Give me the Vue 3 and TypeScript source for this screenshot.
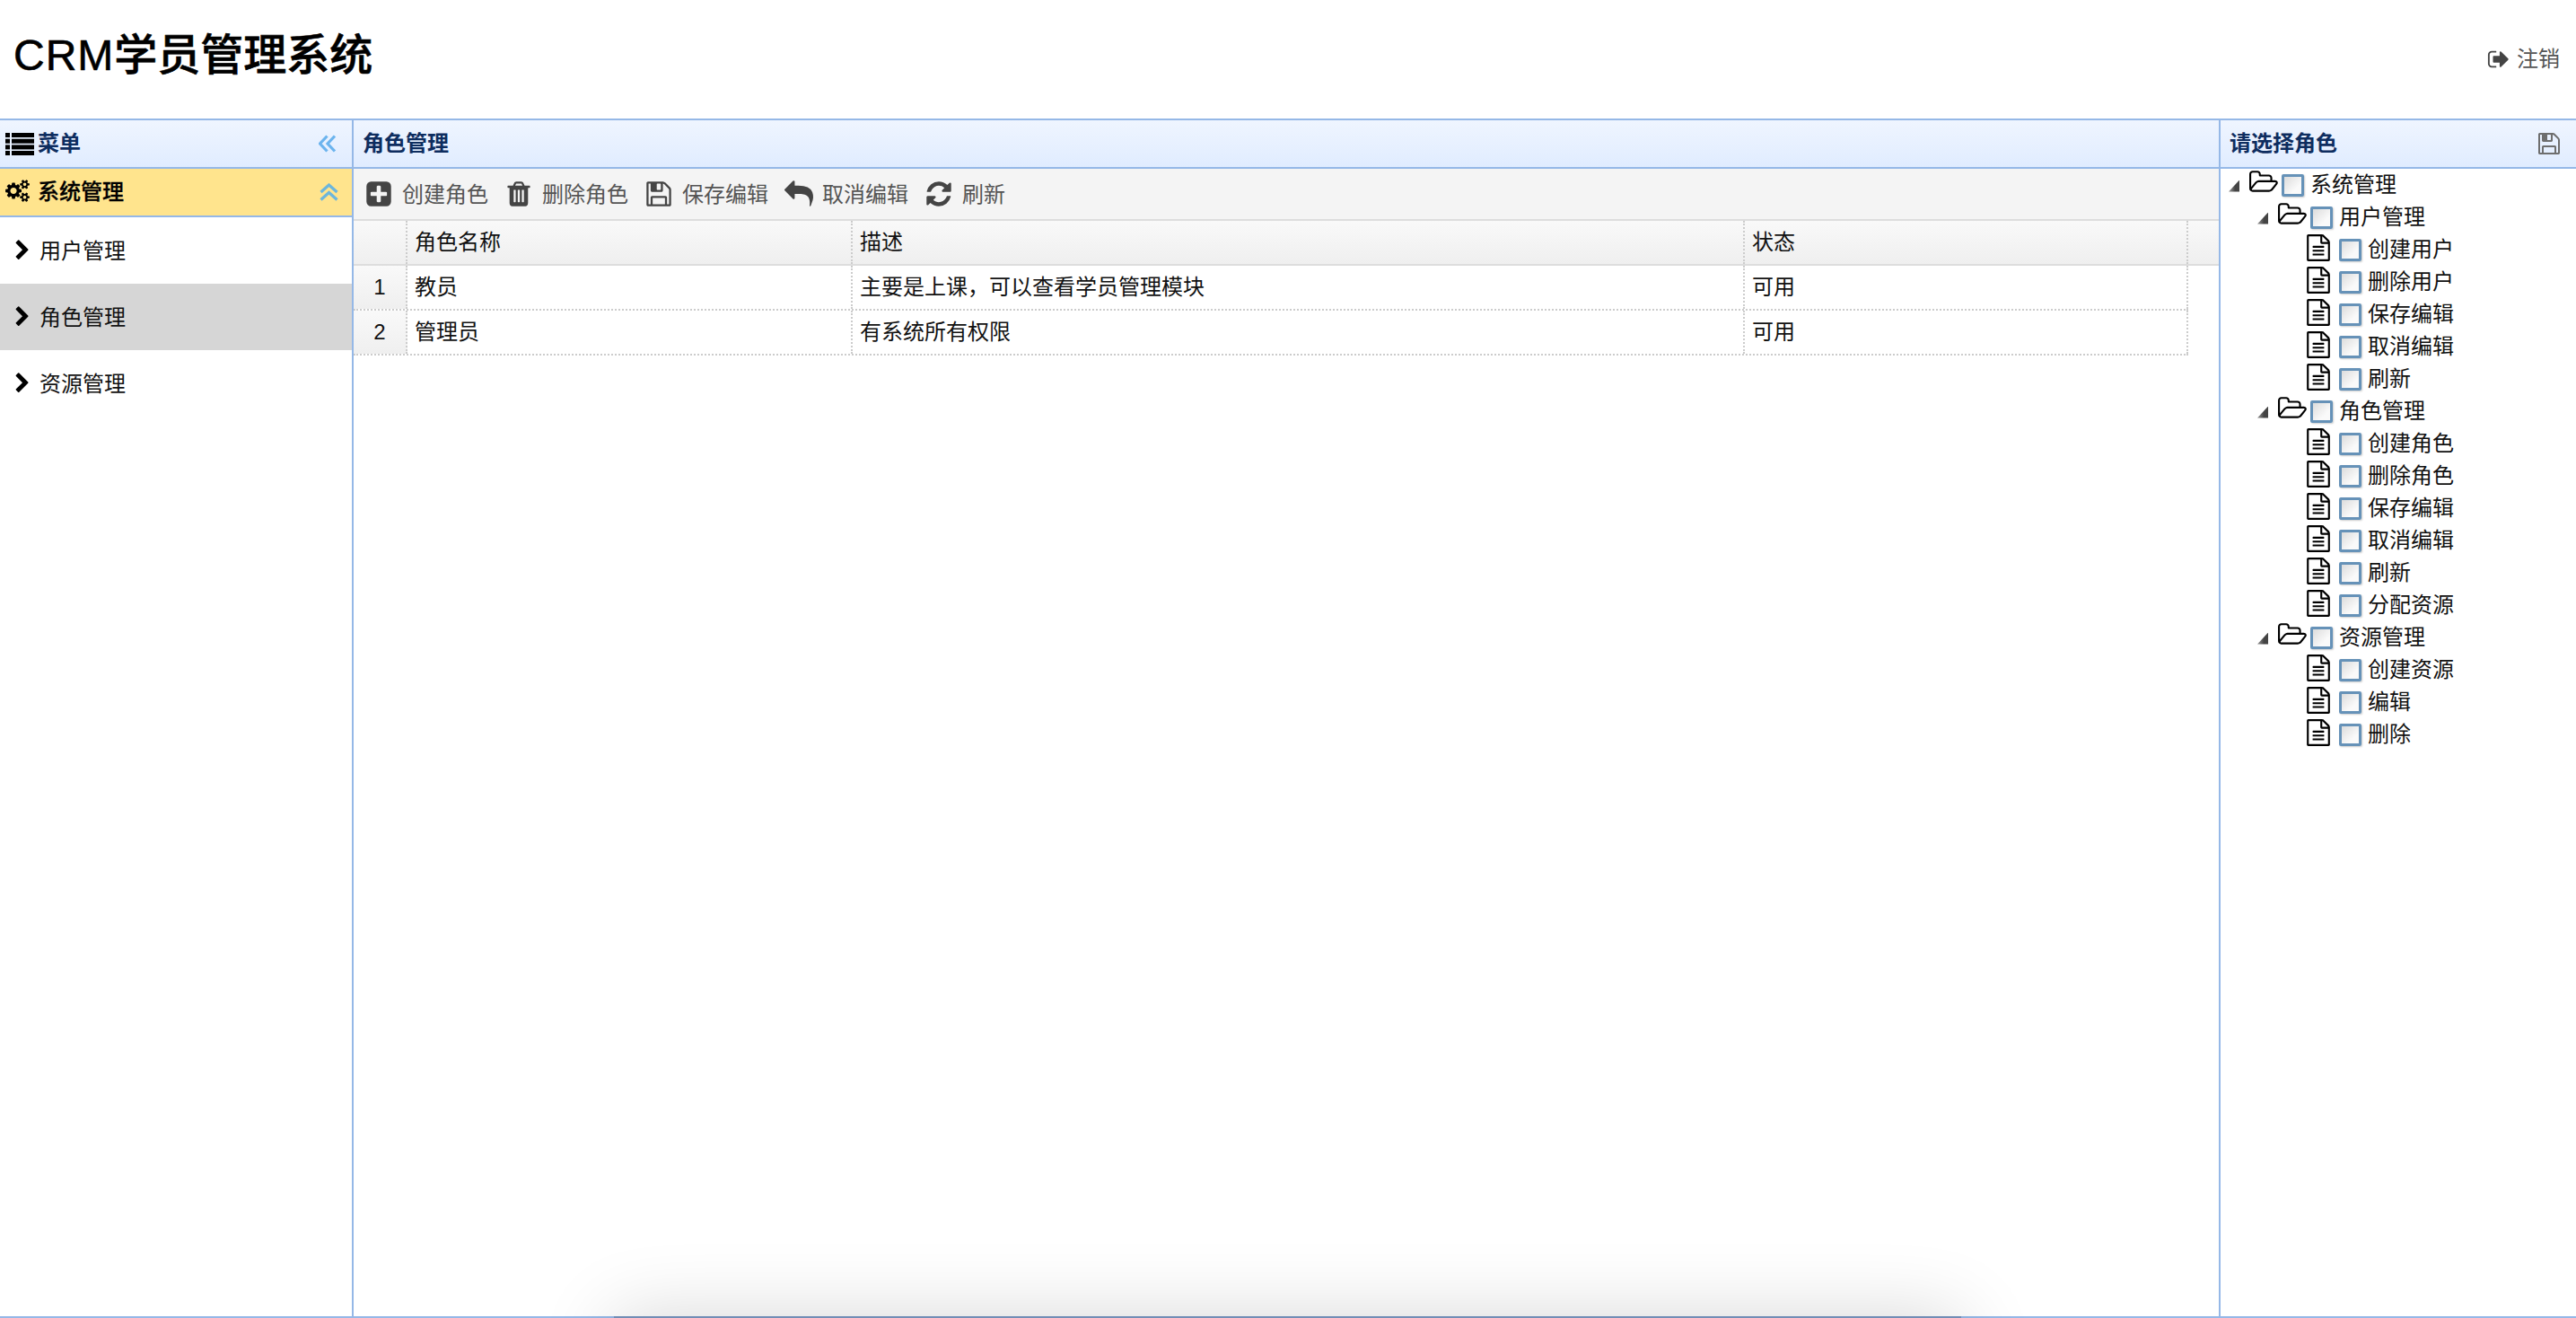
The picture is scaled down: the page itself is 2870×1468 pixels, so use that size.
<script setup lang="ts">
type Node = { label: string; depth: number; leaf: boolean }

const node = (label: string, depth: number, leaf = true): Node => ({ label, depth, leaf })

const tree: Node[] = [
  node('系统管理', 0, false),
  node('用户管理', 1, false),
  ...['创建用户', '删除用户', '保存编辑', '取消编辑', '刷新'].map((l) => node(l, 2)),
  node('角色管理', 1, false),
  ...['创建角色', '删除角色', '保存编辑', '取消编辑', '刷新', '分配资源'].map((l) => node(l, 2)),
  node('资源管理', 1, false),
  ...['创建资源', '编辑', '删除'].map((l) => node(l, 2)),
]

const icons = {
  plus: 'M1408 960v-128q0-26-19-45t-45-19h-320v-320q0-26-19-45t-45-19h-128q-26 0-45 19t-19 45v320h-320q-26 0-45 19t-19 45v128q0 26 19 45t45 19h320v320q0 26 19 45t45 19h128q26 0 45-19t19-45v-320h320q26 0 45-19t19-45zm256-544v960q0 119-84.5 203.5t-203.5 84.5h-960q-119 0-203.5-84.5t-84.5-203.5v-960q0-119 84.5-203.5t203.5-84.5h960q119 0 203.5 84.5t84.5 203.5z',
  trash: 'M704 1376v-704q0-14-9-23t-23-9h-64q-14 0-23 9t-9 23v704q0 14 9 23t23 9h64q14 0 23-9t9-23zm256 0v-704q0-14-9-23t-23-9h-64q-14 0-23 9t-9 23v704q0 14 9 23t23 9h64q14 0 23-9t9-23zm256 0v-704q0-14-9-23t-23-9h-64q-14 0-23 9t-9 23v704q0 14 9 23t23 9h64q14 0 23-9t9-23zm-544-992h448l-48-117q-7-9-17-11h-317q-10 2-17 11zm928 32v64q0 14-9 23t-23 9h-96v948q0 83-47 143.5t-113 60.5h-832q-66 0-113-58.5t-47-141.5v-952h-96q-14 0-23-9t-9-23v-64q0-14 9-23t23-9h309l70-167q15-37 54-63t79-26h320q40 0 79 26t54 63l70 167h309q14 0 23 9t9 23z',
  save: 'M512 1536h768v-384h-768v384zm896 0h128v-896q0-14-10-38.5t-20-34.5l-281-281q-10-10-34-20t-39-10v416q0 40-28 68t-68 28h-576q-40 0-68-28t-28-68v-416h-128v1280h128v-416q0-40 28-68t68-28h832q40 0 68 28t28 68v416zm-384-928v-320q0-13-9.5-22.5t-22.5-9.5h-192q-13 0-22.5 9.5t-9.5 22.5v320q0 13 9.5 22.5t22.5 9.5h192q13 0 22.5-9.5t9.5-22.5zm640 32v928q0 40-28 68t-68 28h-1344q-40 0-68-28t-28-68v-1344q0-40 28-68t68-28h928q40 0 88 20t76 48l280 280q28 28 48 76t20 88z',
  reply: 'M1792 1120q0 166-127 451-3 7-10.5 24t-13.5 30-13 22q-12 17-28 17-15 0-23.5-10t-8.5-25q0-9 2.5-26.5t2.5-23.5q5-68 5-123 0-101-17.5-181t-48.5-138.5-80-101-105.5-69.5-133-42.5-154-21.5-175.5-6h-224v256q0 26-19 45t-45 19-45-19l-512-512q-19-19-19-45t19-45l512-512q19-19 45-19t45 19 19 45v256h224q713 0 875 403 53 134 53 333z',
  refresh: 'M1639 1056q0 5-1 7-64 268-268 434.5t-478 166.5q-146 0-282.5-55t-243.5-157l-129 129q-19 19-45 19t-45-19-19-45v-448q0-26 19-45t45-19h448q26 0 45 19t19 45-19 45l-137 137q71 66 161 102t187 36q134 0 250-65t186-179q11-17 53-117 8-23 30-23h192q13 0 22.5 9.5t9.5 22.5zm25-800v448q0 26-19 45t-45 19h-448q-26 0-45-19t-19-45 19-45l138-138q-148-137-349-137-134 0-250 65t-186 179q-11 17-53 117-8 23-30 23h-199q-13 0-22.5-9.5t-9.5-22.5v-7q65-268 270-434.5t480-166.5q146 0 284 55.5t245 156.5l130-129q19-19 45-19t45 19 19 45z',
  signout: 'M704 1440q0 4 1 20t.5 26.5-3 23.5-10 19.5-20.5 6.5h-320q-119 0-203.5-84.5t-84.5-203.5v-704q0-119 84.5-203.5t203.5-84.5h320q13 0 22.5 9.5t9.5 22.5q0 4 1 20t.5 26.5-3 23.5-10 19.5-20.5 6.5h-320q-66 0-113 47t-47 113v704q0 66 47 113t113 47h312l11.5 1 11.5 3 8 5.5 7 9 2 13.5zm928-544q0 26-19 45l-544 544q-19 19-45 19t-45-19-19-45v-288h-448q-26 0-45-19t-19-45v-384q0-26 19-45t45-19h448v-288q0-26 19-45t45-19 45 19l544 544q19 19 19 45z',
  chevron: 'M1363 877l-742 742q-19 19-45 19t-45-19l-166-166q-19-19-19-45t19-45l531-531-531-531q-19-19-19-45t19-45l166-166q19-19 45-19t45 19l742 742q19 19 19 45t-19 45z',
  file: 'M1596 380q28 28 48 76t20 88v1152q0 40-28 68t-68 28h-1344q-40 0-68-28t-28-68v-1600q0-40 28-68t68-28h896q40 0 88 20t76 48zm-444-244v376h376q-10-29-22-41l-313-313q-12-12-41-22zm384 1528v-1024h-416q-40 0-68-28t-28-68v-416h-768v1536h1280zm-1024-864q0-14 9-23t23-9h704q14 0 23 9t9 23v64q0 14-9 23t-23 9h-704q-14 0-23-9t-9-23v-64zm736 224q14 0 23 9t9 23v64q0 14-9 23t-23 9h-704q-14 0-23-9t-9-23v-64q0-14 9-23t23-9h704zm0 256q14 0 23 9t9 23v64q0 14-9 23t-23 9h-704q-14 0-23-9t-9-23v-64q0-14 9-23t23-9h704z',
  folder: 'M1781 931q0-35-53-35h-1088q-40 0-85.5 21.5t-71.5 52.5l-294 363q-18 24-18 40 0 35 53 35h1088q40 0 86-22t71-53l294-363q18-22 18-39zm-1141-163h768v-160q0-40-28-68t-68-28h-576q-40 0-68-28t-28-68v-64q0-40-28-68t-68-28h-320q-40 0-68 28t-28 68v853l256-315q44-53 116-87.5t140-34.5zm1269 163q0 62-46 120l-295 363q-43 53-116 87.5t-140 34.5h-1088q-92 0-158-66t-66-158v-960q0-92 66-158t158-66h320q92 0 158 66t66 158v32h544q92 0 158 66t66 158v160h192q54 0 99 24.5t67 70.5q15 32 15 68z',
  cogs: 'M896 896q0-106-75-181t-181-75-181 75-75 181 75 181 181 75 181-75 75-181zm768 512q0-52-38-90t-90-38-90 38-38 90q0 53 37.5 90.5t90.5 37.5 90.5-37.5 37.5-90.5zm0-1024q0-52-38-90t-90-38-90 38-38 90q0 53 37.5 90.5t90.5 37.5 90.5-37.5 37.5-90.5zm-384 421v185q0 10-7 19.5t-16 10.5l-155 24q-11 35-32 76 34 48 90 115 7 11 7 20 0 12-7 19-23 30-82.5 89.5t-78.5 59.5q-11 0-21-7l-115-90q-37 19-77 31-11 108-23 155-7 24-30 24h-186q-11 0-20-7.5t-10-17.5l-23-153q-34-10-75-31l-118 89q-7 7-20 7-11 0-21-8-144-133-144-160 0-9 7-19 10-14 41-53t47-61q-23-44-35-82l-152-24q-10-1-17-9.5t-7-19.5v-185q0-10 7-19.5t16-10.5l155-24q11-35 32-76-34-48-90-115-7-11-7-20 0-12 7-20 22-30 82-89t79-59q11 0 21 7l115 90q34-18 77-32 11-108 23-154 7-24 30-24h186q11 0 20 7.5t10 17.5l23 153q34 10 75 31l118-89q8-7 20-7 11 0 21 8 144 133 144 160 0 8-7 19-12 16-42 54t-45 60q23 48 34 82l152 23q10 2 17 10.5t7 19.5zm640 533v140q0 16-149 31-12 27-30 52 51 113 51 138 0 4-4 7-122 71-124 71-8 0-46-47t-52-68q-20 2-30 2t-30-2q-14 21-52 68t-46 47q-2 0-124-71-4-3-4-7 0-25 51-138-18-25-30-52-149-15-149-31v-140q0-16 149-31 13-29 30-52-51-113-51-138 0-4 4-7 4-2 35-20t59-34 30-16q8 0 46 46.5t52 67.5q20-2 30-2t30 2q51-71 92-112l6-2q4 0 124 70 4 3 4 7 0 25-51 138 17 23 30 52 149 15 149 31zm0-1024v140q0 16-149 31-12 27-30 52 51 113 51 138 0 4-4 7-122 71-124 71-8 0-46-47t-52-68q-20 2-30 2t-30-2q-14 21-52 68t-46 47q-2 0-124-71-4-3-4-7 0-25 51-138-18-25-30-52-149-15-149-31v-140q0-16 149-31 13-29 30-52-51-113-51-138 0-4 4-7 4-2 35-20t59-34 30-16q8 0 46 46.5t52 67.5q20-2 30-2t30 2q51-71 92-112l6-2q4 0 124 70 4 3 4 7 0 25-51 138 17 23 30 52 149 15 149 31z',
}

const tools = [
  { label: '创建角色', icon: icons.plus },
  { label: '删除角色', icon: icons.trash },
  { label: '保存编辑', icon: icons.save },
  { label: '取消编辑', icon: icons.reply },
  { label: '刷新', icon: icons.refresh },
]

const menu = ['用户管理', '角色管理', '资源管理']

const rows = [
  { no: 1, name: '教员', desc: '主要是上课，可以查看学员管理模块', state: '可用' },
  { no: 2, name: '管理员', desc: '有系统所有权限', state: '可用' },
]
</script>

<template>
  <div class="app">
    <header class="top">
      <h1 class="brand"><span class="brand-latin">CRM</span>学员管理系统</h1>
      <a class="logout">
        <svg class="logout-icon" viewBox="0 0 1792 1792"><path :d="icons.signout" /></svg>
        注销
      </a>
    </header>

    <main class="main">
      <aside class="west">
        <div class="panel-head">
          <svg class="list-icon" viewBox="0 0 32 25">
            <rect x="0" y="0" width="5" height="5" /><rect x="7" y="0" width="25" height="5" />
            <rect x="0" y="6.7" width="5" height="5" /><rect x="7" y="6.7" width="25" height="5" />
            <rect x="0" y="13.4" width="5" height="5" /><rect x="7" y="13.4" width="25" height="5" />
            <rect x="0" y="20" width="5" height="5" /><rect x="7" y="20" width="25" height="5" />
          </svg>
          <span class="panel-title menu-title">菜单</span>
          <svg class="collapse-icon" viewBox="0 0 20 20">
            <path d="M9.5 1.5 1.5 10l8 8.5M18 1.5 10 10l8 8.5" />
          </svg>
        </div>
        <div class="acc-head">
          <svg class="cogs-icon" viewBox="0 0 1920 1792"><path :d="icons.cogs" /></svg>
          <span class="acc-title">系统管理</span>
          <svg class="up-icon" viewBox="0 0 21 20">
            <path d="M1.5 10 10.5 2l9 8M1.5 18.5l9-8 9 8" />
          </svg>
        </div>
        <ul class="menu">
          <li v-for="m in menu" :key="m" class="menu-item" :class="{ active: m === '角色管理' }">
            <svg class="chevron" viewBox="0 0 1792 1792"><path :d="icons.chevron" /></svg>
            <span class="menu-text">{{ m }}</span>
          </li>
        </ul>
      </aside>

      <section class="center">
        <div class="panel-head center-head">
          <span class="panel-title">角色管理</span>
        </div>
        <div class="toolbar">
          <a v-for="t in tools" :key="t.label" class="tool">
            <span class="tool-slot">
              <svg class="tool-icon" viewBox="0 0 1792 1792"><path :d="t.icon" /></svg>
            </span>
            <span class="tool-text">{{ t.label }}</span>
          </a>
        </div>
        <div class="grid-head">
          <div class="cell c-no"></div>
          <div class="cell c-name">角色名称</div>
          <div class="cell c-desc">描述</div>
          <div class="cell c-state">状态</div>
        </div>
        <div v-for="r in rows" :key="r.no" class="grid-row">
          <div class="cell c-no no-cell">{{ r.no }}</div>
          <div class="cell c-name">{{ r.name }}</div>
          <div class="cell c-desc">{{ r.desc }}</div>
          <div class="cell c-state">{{ r.state }}</div>
        </div>
      </section>

      <aside class="east">
        <div class="panel-head east-head">
          <span class="panel-title">请选择角色</span>
          <svg class="east-save" viewBox="128 128 1536 1536"><path :d="icons.save" /></svg>
        </div>
        <ul class="tree">
          <li
            v-for="(n, i) in tree"
            :key="i"
            class="tree-row"
            :style="{ paddingLeft: 8 + n.depth * 32 + 'px' }"
          >
            <span class="tri-slot"><i v-if="!n.leaf" class="tri"></i></span>
            <span class="ico-slot">
              <svg v-if="!n.leaf" class="folder" viewBox="0 0 1920 1792"><path :d="icons.folder" /></svg>
              <svg v-else class="file" viewBox="0 0 1792 1792"><path :d="icons.file" /></svg>
            </span>
            <i class="check"></i>
            <span class="tree-text">{{ n.label }}</span>
          </li>
        </ul>
      </aside>
    </main>

    <div class="edge-shadow"></div>
  </div>
</template>

<style>
html, body { margin: 0; padding: 0; overflow: hidden; background: #fff; }
</style>

<style scoped>
.app {
  position: relative;
  height: 100vh;
  display: flex;
  flex-direction: column;
  overflow: hidden;
  font-family: "Liberation Sans", "Noto Sans CJK SC", sans-serif;
  font-size: 24px;
  color: #111;
  background: #fff;
}
ul { list-style: none; margin: 0; padding: 0; }
svg { display: block; flex: none; fill: currentColor; }

.top {
  flex: none;
  height: 132px;
  display: flex;
  align-items: center;
  justify-content: space-between;
  padding: 0 18px 0 15px;
}
.brand {
  margin: 0 0 8px;
  font-size: 48px;
  font-weight: 500;
  line-height: 56px;
  color: #000;
  -webkit-text-stroke: .6px #000;
}
.brand-latin { letter-spacing: 1px; }
.logout { display: flex; align-items: center; gap: 7px; color: #555; line-height: 30px; }
.logout-icon { width: 26px; height: 26px; color: #444; }

.main {
  flex: 1;
  min-height: 0;
  display: flex;
  border-top: 2px solid #95b8e7;
  border-bottom: 2px solid #95b8e7;
}
.west { flex: none; width: 392px; border-right: 2px solid #95b8e7; }
.center { flex: 1; min-width: 0; }
.east { flex: none; width: 396px; border-left: 2px solid #95b8e7; }

.panel-head {
  height: 52px;
  display: flex;
  align-items: center;
  border-bottom: 2px solid #95b8e7;
  background: linear-gradient(to bottom, #eff5ff 0, #e0ecff 100%);
}
.panel-title { font-weight: 700; color: #0e2d5f; line-height: 30px; }
.list-icon { width: 32px; height: 25px; margin-left: 6px; color: #000; }
.menu-title { margin-left: 4px; flex: 1; }
.collapse-icon { width: 20px; height: 20px; margin-right: 17px; fill: none; stroke: #6cb4ee; stroke-width: 3.2; }
.center-head { padding-left: 10px; }
.east-head { padding: 0 18px 0 10px; justify-content: space-between; }
.east-save { width: 24px; height: 24px; color: #6e6e6e; }

.acc-head {
  height: 52px;
  display: flex;
  align-items: center;
  background: #ffe48d;
  border-bottom: 2px solid #95b8e7;
}
.cogs-icon { width: 27px; height: 25px; margin: 0 0 4px 6px; color: #000; }
.acc-title { margin-left: 9px; flex: 1; font-weight: 500; color: #000; line-height: 30px; -webkit-text-stroke: .3px #000; }
.up-icon { width: 21px; height: 20px; margin-right: 15px; fill: none; stroke: #6cb6dc; stroke-width: 3.2; }

.menu-item {
  height: 74px;
  display: flex;
  align-items: center;
  padding-left: 13px;
  gap: 7px;
  color: #111;
}
.menu-item.active { background: #d6d6d6; }
.chevron { width: 24px; height: 24px; color: #000; }
.menu-text { margin-bottom: 4px; }

.toolbar {
  height: 56px;
  display: flex;
  align-items: center;
  gap: 20px;
  padding-left: 14px;
  background: #f4f4f4;
  border-bottom: 2px solid #ddd;
  color: #555;
}
.tool { display: flex; align-items: center; gap: 9px; }
.tool-slot { width: 32px; display: flex; }
.tool-icon { width: 32px; height: 32px; margin-left: -2px; color: #444; }
.tool-text { margin: 0 0 3px -1px; }

.grid-head, .grid-row { display: flex; }
.grid-head {
  height: 48px;
  border-bottom: 2px solid #ddd;
  background: linear-gradient(to bottom, #f9f9f9 0, #efefef 100%);
}
.grid-row { height: 48px; width: 2044px; border-bottom: 2px dotted #ccc; }
.cell {
  box-sizing: border-box;
  flex: none;
  display: flex;
  align-items: center;
  padding-left: 8px;
  border-right: 2px dotted #ccc;
  line-height: 30px;
}
.c-no { width: 60px; padding: 0; justify-content: center; }
.c-name { width: 496px; }
.c-desc { width: 994px; }
.c-state { width: 494px; }
.no-cell { background: linear-gradient(to bottom, #f9f9f9 0, #efefef 100%); }

.tree-row { height: 36px; display: flex; align-items: center; }
.tri-slot { width: 24px; display: flex; }
.tri {
  width: 12px;
  height: 13px;
  margin: 2px 0 0 1px;
  background: linear-gradient(to right, #999, #444 60%);
  clip-path: polygon(100% 0, 100% 100%, 0 100%);
}
.ico-slot { width: 36px; display: flex; }
.folder { width: 32px; height: 30px; margin-bottom: 7px; color: #000; }
.file { width: 30px; height: 30px; margin: 0 0 5px -2px; color: #000; }
.check {
  box-sizing: border-box;
  flex: none;
  width: 25px;
  height: 25px;
  border: 3px solid #6692b8;
  border-radius: 2px;
  background: linear-gradient(135deg, #dcdcdc 0, #fafafa 70%);
  box-shadow: 1px 1px 2px #ccc;
}
.tree-text { margin-left: 7px; line-height: 30px; color: #111; }

.edge-shadow {
  position: absolute;
  left: 684px;
  right: 685px;
  bottom: -198px;
  height: 200px;
  background: rgba(50, 60, 90, .35);
  box-shadow: 0 0 85px rgba(0, 0, 0, .16);
}
</style>
